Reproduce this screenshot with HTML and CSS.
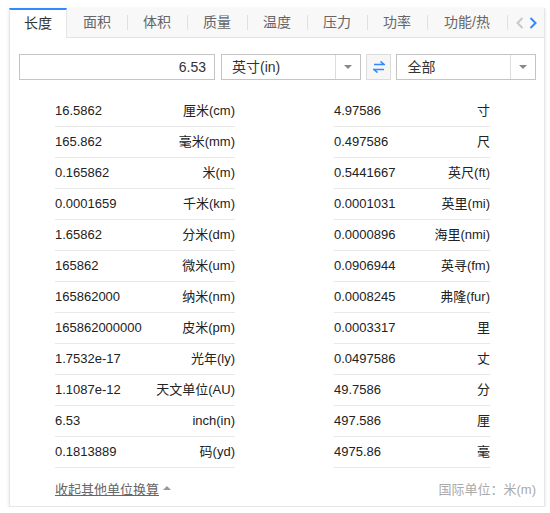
FILE: index.html
```html
<!DOCTYPE html>
<html lang="zh-CN">
<head>
  <meta charset="UTF-8" />
  <meta name="viewport" content="width=device-width, initial-scale=1" />
  <title>单位换算 - 长度</title>
  <link rel="stylesheet" href="styles.css">
</head>
<body>
  <div class="converter">
    <div class="tabs">
      <span class="tab active">长度</span>
      <span class="tab">面积</span>
      <span class="tab">体积</span>
      <span class="tab">质量</span>
      <span class="tab">温度</span>
      <span class="tab">压力</span>
      <span class="tab">功率</span>
      <span class="tab wide">功能/热</span>
      <span class="tab-nav">
        <svg width="8" height="12" viewBox="0 0 8 12"><path d="M6.5 1 L1.5 6 L6.5 11" fill="none" stroke="#c8c8c8" stroke-width="2"/></svg>
        <svg width="8" height="12" viewBox="0 0 8 12"><path d="M1.5 1 L6.5 6 L1.5 11" fill="none" stroke="#3388ff" stroke-width="2"/></svg>
      </span>
    </div>

    <div class="body">
      <div class="controls">
        <input class="value-input" type="text" value="6.53">
        <div class="select unit-select">
          <span class="select-text">英寸(in)</span>
          <span class="select-arrow"></span>
        </div>
        <button class="swap-btn" title="交换">
          <svg width="12" height="12" viewBox="0 0 12 12">
            <path d="M1 3.5 H11 L7.5 0.5" fill="none" stroke="#3388ff" stroke-width="1.6"/>
            <path d="M11 8.5 H1 L4.5 11.5" fill="none" stroke="#3388ff" stroke-width="1.6"/>
          </svg>
        </button>
        <div class="select scope-select">
          <span class="select-text">全部</span>
          <span class="select-arrow"></span>
        </div>
      </div>

      <div class="results" id="results"></div>

      <div class="footer">
        <a class="collapse-link" href="#">收起其他单位换算</a><span class="caret-up"></span>
        <span class="si-unit">国际单位：米(m)</span>
      </div>
    </div>
  </div>

  <script>
    // 左右两列的换算结果
    const left = [
      ['16.5862', '厘米(cm)'],
      ['165.862', '毫米(mm)'],
      ['0.165862', '米(m)'],
      ['0.0001659', '千米(km)'],
      ['1.65862', '分米(dm)'],
      ['165862', '微米(um)'],
      ['165862000', '纳米(nm)'],
      ['165862000000', '皮米(pm)'],
      ['1.7532e-17', '光年(ly)'],
      ['1.1087e-12', '天文单位(AU)'],
      ['6.53', 'inch(in)'],
      ['0.1813889', '码(yd)']
    ];
    const right = [
      ['4.97586', '寸'],
      ['0.497586', '尺'],
      ['0.5441667', '英尺(ft)'],
      ['0.0001031', '英里(mi)'],
      ['0.0000896', '海里(nmi)'],
      ['0.0906944', '英寻(fm)'],
      ['0.0008245', '弗隆(fur)'],
      ['0.0003317', '里'],
      ['0.0497586', '丈'],
      ['49.7586', '分'],
      ['497.586', '厘'],
      ['4975.86', '毫']
    ];

    const results = document.getElementById('results');
    left.forEach((item, i) => {
      [item, right[i]].forEach(([num, unit]) => {
        const row = document.createElement('div');
        row.className = 'row';
        row.innerHTML = `<span class="num">${num}</span><span class="unit">${unit}</span>`;
        results.appendChild(row);
      });
    });
  </script>
</body>
</html>
```

FILE: styles.css
```css
body {
  margin: 0;
  background: #fff;
  color: #333;
  font-family: "Liberation Sans", Arial, "Noto Sans CJK SC", sans-serif;
  font-size: 13px;
}
.converter {
  margin: 8px 0 0 9px;
  width: 536px;
  height: 499px;
  border: 1px solid #e6e6e6;
  border-top: none;
  box-shadow: 0 1px 3px rgba(0, 0, 0, 0.12);
  box-sizing: border-box;
  background: #fff;
}

/* 分类标签栏 */
.tabs {
  display: flex;
  align-items: center;
  height: 30px;
  background: #f8f8f8;
  border-bottom: 1px solid #e3e3e3;
  box-sizing: border-box;
}
.tab {
  position: relative;
  width: 60px;
  height: 100%;
  line-height: 28px;
  text-align: center;
  font-size: 14px;
  color: #666;
}
.tab + .tab::before {
  content: "";
  position: absolute;
  left: 0;
  top: 7px;
  height: 15px;
  border-left: 1px solid #e0e0e0;
}
.tab.active {
  width: 58px;
  margin-left: -1px;
  background: #fff;
  color: #333;
  border-top: 2px solid #3388ff;
  border-left: 1px solid #e6e6e6;
  border-right: 1px solid #e6e6e6;
  height: 30px;
  line-height: 27px;
  box-sizing: border-box;
}
.tab.active + .tab::before {
  display: none;
}
.tab.wide {
  width: 80px;
}
.tab-nav {
  position: relative;
  display: flex;
  gap: 5px;
  padding-left: 9px;
  height: 100%;
  align-items: center;
}
.tab-nav::before {
  content: "";
  position: absolute;
  left: 0;
  top: 7px;
  height: 15px;
  border-left: 1px solid #e0e0e0;
}

.body {
  padding: 16px 8px 0 9px;
}

/* 输入与选择 */
.controls {
  display: flex;
  height: 26px;
}
.value-input {
  width: 196px;
  height: 26px;
  box-sizing: border-box;
  border: 1px solid #c4c4c4;
  padding: 0 8px;
  text-align: right;
  font: 14px "Liberation Sans", Arial, sans-serif;
  color: #333;
  outline: none;
}
.select {
  display: flex;
  width: 140px;
  height: 26px;
  box-sizing: border-box;
  border: 1px solid #c4c4c4;
  margin-left: 6px;
}
.select-text {
  flex: 1;
  line-height: 24px;
  padding-left: 10px;
  font-size: 14px;
  color: #333;
}
.select-arrow {
  width: 24px;
  border-left: 1px solid #dcdcdc;
  display: flex;
  align-items: center;
  justify-content: center;
}
.select-arrow::after {
  content: "";
  border-left: 4px solid transparent;
  border-right: 4px solid transparent;
  border-top: 4px solid #888;
}
.swap-btn {
  width: 26px;
  height: 26px;
  margin-left: 5px;
  padding: 0;
  border: 1px solid #dcdcdc;
  background: #f6f6f6;
  display: flex;
  align-items: center;
  justify-content: center;
  cursor: pointer;
}
.scope-select {
  margin-left: 5px;
}

/* 换算结果 */
.results {
  display: grid;
  grid-template-columns: 180px 156px;
  column-gap: 99px;
  padding: 16px 0 0 36px;
}
.row {
  display: flex;
  justify-content: space-between;
  height: 31px;
  line-height: 30px;
  border-bottom: 1px solid #e8e8e8;
  box-sizing: border-box;
  color: #222;
}

.footer {
  display: flex;
  align-items: center;
  padding: 11px 0 0 36px;
  height: 18px;
}
.collapse-link {
  color: #666;
  text-decoration: underline;
  font-size: 13px;
}
.caret-up {
  margin-left: 4px;
  border-left: 4px solid transparent;
  border-right: 4px solid transparent;
  border-bottom: 4px solid #999;
}
.si-unit {
  margin-left: auto;
  color: #aaa;
  font-size: 13px;
}
```
